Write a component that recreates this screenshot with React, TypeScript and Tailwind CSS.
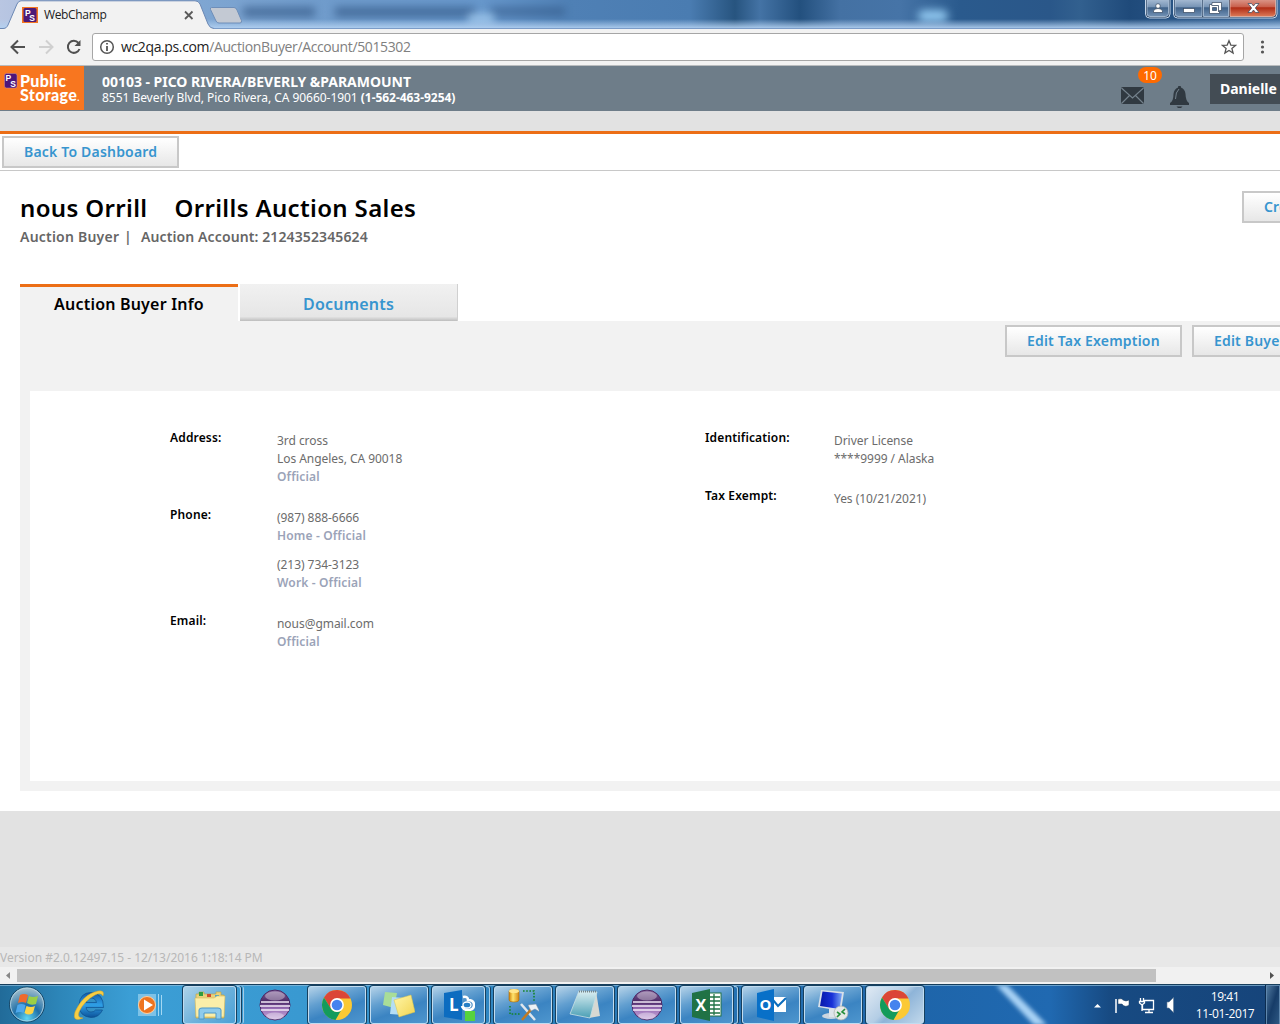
import React from "react";

function BrandMark({ size = 16, className = "" }: { size?: number; className?: string }) {
  return (
    <svg width={size} height={size} viewBox="0 0 16 16" className={className}>
      <rect width="16" height="16" fill="#f47521" />
      <rect x="1.5" y="1" width="13" height="14" rx="1.5" fill="#4c1a78" />
      <text x="3" y="9" fontSize="8.5" fontWeight="700" fill="#fff" fontFamily="Liberation Sans, sans-serif">P</text>
      <text x="7.300" y="13.5" fontSize="8.5" fontWeight="700" fill="#fff" fontFamily="Liberation Sans, sans-serif">S</text>
    </svg>
  );
}

function TitleBar() {
  return (
    <div className="relative h-[29px] overflow-hidden bg-[linear-gradient(90deg,#b9c6e2_0px,#7fa6d2_200px,#6f9bcb_330px,#6797cb_480px,#4f80b5_570px,#4a7cb1_690px,#27547f_735px,#4473a5_760px,#23507e_800px,#4471a3_840px,#4674a7_900px,#2a5a8d_960px,#2a5789_1050px,#32608f_1080px,#1f4a7a_1130px,#3c6a9c_1280px)]">
      <div className="absolute left-[243px] top-[7px] h-[10px] w-[72px] bg-[#2b4f7d] opacity-60 blur-[4px]" />
      <div className="absolute left-[335px] top-[7px] h-[10px] w-[140px] bg-[#2b4f7d] opacity-60 blur-[4px]" />
      <div className="absolute left-[490px] top-[7px] h-[9px] w-[75px] bg-[#2b4f7d] opacity-50 blur-[4px]" />
      <div className="absolute left-[468px] top-[14px] h-[10px] w-[26px] bg-[#a9d0f2] opacity-80 blur-[4px]" />
      <div className="absolute left-[918px] top-[10px] h-[12px] w-[30px] rounded-full bg-[#8fc6ee] blur-[4px]" />
      <div className="absolute inset-x-0 bottom-0 h-[10px] bg-linear-to-b from-transparent to-[#b3d1f1]" />
      <div className="absolute inset-x-0 bottom-0 h-px bg-[#7b9cc8]" />
      <svg className="absolute left-0 top-0" width="245" height="29">
        <path d="M0 28.500H3C6 28.500 7 27 8 25L17 4Q18.500 .8 21 .8H195Q198.500 .8 200 4L208 24Q210 28.500 214 28.500V29H0Z" fill="#f2f2f2" />
        <path d="M0 28.500H3C6 28.500 7 27 8 25L17 4Q18.500 .8 21 .8H195Q198.500 .8 200 4L208 24Q210 28.500 214 28.500" fill="none" stroke="#6c88b4" />
        <path d="M211.500 7.500H234Q236 7.500 237 10L241.500 20.500Q242 23 240 23H219Q217 23 216 21L210.500 9.500Q210 7.500 211.500 7.500Z" fill="#c3c9d3" stroke="#6e8eb9" />
        <path d="M185 11.500l7.500 7.500M192.500 11.500l-7.500 7.500" stroke="#5a5a5a" strokeWidth="1.800" />
      </svg>
      <BrandMark className="absolute left-[22px] top-[7px]" />
      <span className="absolute left-[44px] top-[7px] font-['Open_Sans',sans-serif] text-[12px] leading-[16px] tracking-[-0.350px] text-[#222]">WebChamp</span>
      <svg className="absolute left-[1144px] top-0" width="136" height="20">
        <defs>
          <linearGradient id="wb" x2="0" y2="1"><stop stopColor="#a9bdd5" /><stop offset=".45" stopColor="#7794b5" /><stop offset=".5" stopColor="#3f6189" /><stop offset="1" stopColor="#7292b5" /></linearGradient>
          <linearGradient id="wr" x2="0" y2="1"><stop stopColor="#dc9a8d" /><stop offset=".45" stopColor="#c9604c" /><stop offset=".5" stopColor="#b02c15" /><stop offset="1" stopColor="#dc7a58" /></linearGradient>
        </defs>
        <path d="M1.500-2V14Q1.500 18 5.500 18H22Q26 18 26 14V-2Z" fill="#1b3454" stroke="#c5d6ea" />
        <path d="M3-1V13.500Q3 16.500 6 16.500H21.500Q24.500 16.500 24.500 13.500V-1Z" fill="url(#wb)" stroke="#b5c9df" strokeWidth=".8" />
        <path d="M29.500-2V14Q29.500 18 33.500 18H129Q133 18 133 14V-2Z" fill="#1b3454" stroke="#c5d6ea" />
        <path d="M31-1V13.500Q31 16.500 34 16.500H58V-1Z" fill="url(#wb)" stroke="#b5c9df" strokeWidth=".8" />
        <path d="M59.500-1V16.500H84.500V-1Z" fill="url(#wb)" stroke="#b5c9df" strokeWidth=".8" />
        <path d="M86-1V16.500H128.500Q131.500 16.500 131.500 13.500V-1Z" fill="url(#wr)" stroke="#edc0b4" strokeWidth=".8" />
        <g fill="#fff" stroke="#34465e" strokeWidth=".7">
          <circle cx="14" cy="6" r="2.300" />
          <path d="M9.500 12.500V11Q10 8.500 14 8.500T18.500 11V12.500Z" />
          <rect x="39.500" y="8.500" width="11" height="4" />
          <path fillRule="evenodd" d="M68 2.500H77.500V10.500H75.500V13.500H65.500V4.500H68ZM68.500 7.500V10.500H72.500V7.500Z" />
          <path d="M104 3.500h3.500l2 2.500 2-2.500h3.500l-3.700 4.500 3.700 4.500h-3.500l-2-2.500-2 2.500H104l3.700-4.500Z" />
        </g>
        <path d="M67.500 5.500H74.500V12" fill="none" stroke="#34465e" strokeWidth=".8" />
      </svg>
    </div>
  );
}

function Toolbar() {
  return (
    <div className="flex h-[37px] items-center border-b border-[#b9bcbe] bg-[#f2f2f2]">
      <svg width="92" height="36" fill="none" strokeWidth="2">
        <path d="M25 18H12M18 11.500L11.500 18L18 24.500" stroke="#505050" />
        <path d="M39 18H52M46 11.500L52.500 18L46 24.500" stroke="#d0d0d0" />
        <path d="M78.500 14A6 6 0 1 0 79.500 20" stroke="#505050" />
        <path d="M80.500 11V17H74.500Z" fill="#505050" />
      </svg>
      <div className="flex h-7 w-[1152px] items-center rounded-[3px] border border-[#a6a6a6] bg-white">
        <svg width="28" height="26" fill="none" stroke="#555" strokeWidth="1.500"><circle cx="14" cy="13" r="6.300" /><path d="M14 12V17M14 9V10.600" strokeWidth="1.800" /></svg>
        <span className="font-['Open_Sans',sans-serif] text-[14px] leading-5 tracking-[-0.370px] text-[#808080]"><span className="text-[#222]">wc2qa.ps.com</span>/AuctionBuyer/Account/5015302</span>
        <svg className="ml-auto mr-[6px]" width="16" height="16" viewBox="0 0 16 16"><path d="M8 1.800L9.800 6.100L14.500 6.400L10.900 9.400L12.100 14L8 11.500L3.900 14L5.100 9.400L1.500 6.400L6.200 6.100Z" fill="none" stroke="#555" strokeWidth="1.300" /></svg>
      </div>
      <svg width="36" height="36" fill="#555"><circle cx="18.500" cy="13" r="1.600" /><circle cx="18.500" cy="18" r="1.600" /><circle cx="18.500" cy="23" r="1.600" /></svg>
    </div>
  );
}

function SiteHeader() {
  return (
    <header className="relative flex h-[45px] bg-[#6e7d89] text-white">
      <div className="flex h-[44px] w-[84px] bg-[#f8761f] pl-1 pt-[7px]">
        <svg width="14" height="16" viewBox="0 0 14 16">
          <rect x=".5" y=".5" width="12.500" height="14.500" rx="2" fill="#4d167a" stroke="#c78fa0" strokeWidth=".5" />
          <text x="1.500" y="8" fontSize="8.500" fontWeight="700" fill="#fff" fontFamily="Liberation Sans, sans-serif">P</text>
          <text x="6.300" y="13.500" fontSize="8.500" fontWeight="700" fill="#fff" fontFamily="Liberation Sans, sans-serif">S</text>
        </svg>
        <div className="ml-[2px] whitespace-nowrap pt-px font-['Lato',sans-serif] text-[16px] font-black leading-[13.500px] tracking-[0.350px]"><div>Public</div><div>Storage<span className="text-[9px]">.</span></div></div>
      </div>
      <div className="ml-[18px] whitespace-nowrap pt-[8px] font-['Noto_Sans',sans-serif]">
        <div className="text-[14px] font-bold leading-4 tracking-[-0.030px]">00103 - PICO RIVERA/BEVERLY &amp;PARAMOUNT</div>
        <div className="text-[12px] leading-4 tracking-[-0.040px]">8551 Beverly Blvd, Pico Rivera, CA 90660-1901 <b>(1-562-463-9254)</b></div>
      </div>
      <svg className="absolute left-[1120px] top-[20px]" width="72" height="24">
        <rect x="1" y="1" width="23" height="17" rx="1.500" fill="#303941" />
        <path d="M1.500 2L12.500 12L23.500 2M1.500 17.500L9.500 9.500M23.500 17.500L15.500 9.500" fill="none" stroke="#75838e" strokeWidth="1.100" />
        <path d="M59.500-.5Q61-.5 61 1.500Q65 3 65.500 8Q65.700 15 69 17V19H50V17Q53.500 15 53.500 8Q54 3 58 1.500Q58-.5 59.500-.5Z" fill="#303941" />
        <path d="M55.500 13Q55.500 6 59 3" fill="none" stroke="#75838e" />
        <path d="M56.500 20.500H62.500L61 22H58Z" fill="#303941" />
      </svg>
      <span className="absolute left-[1138px] top-px h-4 w-6 rounded-full bg-[#ff6a00] text-center font-['Noto_Sans',sans-serif] text-[12px] leading-[17px]">10</span>
      <div className="absolute left-[1210px] top-[8px] h-[30px] w-[70px] whitespace-nowrap bg-[#434c54] pl-[10px] font-['Noto_Sans',sans-serif] text-[14px] font-bold leading-[30px] tracking-[-0.020px]">Danielle</div>
    </header>
  );
}

function ActionButton({ children, className = "" }: { children: React.ReactNode; className?: string }) {
  return <button className={`h-8 w-[177px] shrink-0 whitespace-nowrap border-2 border-[#c8c8c8] bg-linear-to-b from-white to-[#e7e7e7] pl-5 text-left text-[14px] font-semibold leading-7 tracking-[0.190px] text-[#3795cf] ${className}`}>{children}</button>;
}

function Field({ label, width, children, className = "" }: { label: string; width: string; children: React.ReactNode; className?: string }) {
  return (
    <div className={`flex ${className}`}>
      <div className={`${width} shrink-0 text-[12px] font-semibold leading-[18px] tracking-[0.150px] text-black`}>{label}</div>
      <div className="whitespace-nowrap pt-[3px] text-[12px] leading-[18px] tracking-[-0.050px] text-[#6c6c6c]">{children}</div>
    </div>
  );
}

function Tag({ children }: { children: React.ReactNode }) {
  return <div className="font-semibold tracking-[0.150px] text-[#9ba3b8]">{children}</div>;
}

function Page() {
  return (
    <main className="h-[640px] overflow-hidden bg-white pl-5">
      <div className="flex h-[113px] justify-between pt-5">
        <div className="whitespace-nowrap">
          <h1 className="flex gap-[27px] text-[24px] font-semibold leading-[34px] tracking-[0.350px] text-black"><span>nous Orrill</span><span>Orrills Auction Sales</span></h1>
          <div className="mt-[3px] flex text-[14px] font-semibold leading-[18px] tracking-[0.110px] text-[#666]"><span className="w-[104px] tracking-[0.220px]">Auction Buyer</span><span className="w-[17px]">|</span><span>Auction Account: 2124352345624</span></div>
        </div>
        <div className="w-[38px] overflow-hidden"><ActionButton>Create Note</ActionButton></div>
      </div>
      <div className="flex h-[37px] gap-[2px] text-center text-[16px] font-semibold tracking-[0.200px]">
        <div className="w-[218px] border-t-3 border-[#ec6e16] bg-[#f2f2f2] leading-[35px] text-black">Auction Buyer Info</div>
        <div className="w-[218px] border-r border-[#d0d0d0] bg-[linear-gradient(#f1f1f1,#e6e6e6_88%,#bdbdbd)] pt-[3px] leading-[35px] text-[#3795cf]">Documents</div>
      </div>
      <section className="h-[470px] bg-[#f2f2f2] pb-[10px] pl-[10px]">
        <div className="flex h-[70px] gap-[10px] overflow-hidden pl-[975px] pt-1"><ActionButton>Edit Tax Exemption</ActionButton><ActionButton>Edit Buyer Info</ActionButton></div>
        <div className="flex h-[390px] bg-white pl-[140px] pt-[38px]">
          <div className="w-[535px]">
            <Field label="Address:" width="w-[107px]" className="h-[77px]">3rd cross<br />Los Angeles, CA 90018<Tag>Official</Tag></Field>
            <Field label="Phone:" width="w-[107px]" className="h-[106px]">(987) 888-6666<Tag>Home - Official</Tag><div className="mt-[11px]">(213) 734-3123</div><Tag>Work - Official</Tag></Field>
            <Field label="Email:" width="w-[107px]">nous@gmail.com<Tag>Official</Tag></Field>
          </div>
          <div>
            <Field label="Identification:" width="w-[129px]" className="h-[58px]">Driver License<br />****9999 / Alaska</Field>
            <Field label="Tax Exempt:" width="w-[129px]">Yes (10/21/2021)</Field>
          </div>
        </div>
      </section>
    </main>
  );
}

function Icon({ name }: { name: string }) {
  return (
    <svg width="32" height="32" viewBox="0 0 32 32" className="shrink-0">
      {name === "explorer" && <g>
        <path d="M2 5H5V3H10V5H22V3H27V6H30V29H2Z" fill="#e8d17c" stroke="#bfa23e" strokeWidth=".6" />
        <rect x="5" y="3" width="4" height="4" fill="#2d9c3d" /><rect x="13" y="5" width="4" height="3" fill="#d14b2d" /><rect x="21" y="6" width="4" height="4" fill="#44a7d1" />
        <path d="M1 9H20L23 7H31L30 28H2Z" fill="#fbeea9" stroke="#d4b95c" strokeWidth=".6" />
        <path d="M5 30V21Q5 19 8 19H24Q27 19 27 21V30H22V24H10V30Z" fill="#8ecbec" stroke="#4c98c9" />
      </g>}
      {name === "eclipse" && <g>
        <circle cx="16" cy="16" r="15" fill="url(#ecl)" stroke="#4a2865" /><path d="M2 13H30M1 17H31M2 21H30" stroke="#f3eaf8" strokeWidth="1.400" /><ellipse cx="16" cy="7" rx="10" ry="4.500" fill="#fff" opacity=".35" /><ellipse cx="16" cy="27" rx="9" ry="3.500" fill="#fff" opacity=".35" />
      </g>}
      {name === "chrome" && <g>
        <circle cx="16" cy="16" r="15" fill="#fbc934" />
        <path d="M3 8.500A15 15 0 0 1 29.500 9.500H16L10 20Z" fill="#db4637" />
        <path d="M3 8.500L10.200 20A6.800 6.800 0 0 0 20 21.500L14.500 31A15 15 0 0 1 3 8.500Z" fill="#149b5c" />
        <circle cx="16" cy="16" r="6.900" fill="#fff" /><circle cx="16" cy="16" r="5.300" fill="#4683ee" />
      </g>}
      {name === "sticky" && <g>
        <path d="M2 3L14 4L11 19L0 16Z" fill="#a9dd98" /><path d="M9 8L22 9L20 26L7 25Z" fill="#b4def5" /><path d="M11 11L28 6L32 23L16 28Z" fill="url(#note)" stroke="#dac449" strokeWidth=".5" />
      </g>}
      {name === "lync" && <g>
        <path d="M1 4L19 1V31L1 28Z" fill="#0c6cc0" /><path d="M20 8Q25 7 25 11Q31 11 31 16Q31 21 25 21Q20 21 19 17" fill="none" stroke="#fff" strokeWidth="2.600" /><ellipse cx="24" cy="16" rx="4" ry="3" fill="#277fc6" stroke="#fff" strokeWidth="1.300" />
        <text x="6" y="22" fontSize="17" fontWeight="700" fill="#fff" fontFamily="Open Sans, sans-serif">L</text><rect x="22" y="22" width="10" height="10" fill="#56d23e" />
      </g>}
      {name === "tools" && <g>
        <path d="M2 2Q2 0 7 0T12 2V11Q12 13 7 13T2 11Z" fill="url(#gold)" stroke="#a66a0a" strokeWidth=".6" /><ellipse cx="7" cy="2" rx="5" ry="2" fill="#ffe68c" />
        <path d="M16 2H27V13M3 17V25H13" fill="none" stroke="#16842b" strokeWidth="1.600" strokeDasharray="1.600 1.600" />
        <path d="M14 15L28 31" stroke="#dfe6ed" strokeWidth="2.500" /><path d="M27 17L15 31" stroke="#c27a22" strokeWidth="2.500" /><path d="M21 16L29 15L33 23L28 20L24 22Z" fill="#edf2f6" stroke="#76899c" strokeWidth=".5" />
      </g>}
      {name === "notepad" && <g>
        <path d="M27 2L31 27L20 29Z" fill="#d7d8d2" /><path d="M10 2L28 3L21 29L1 25Z" fill="url(#pad)" stroke="#c9dfe3" strokeWidth=".8" /><path d="M10 2.500H27" stroke="#74848a" strokeWidth="2" strokeDasharray="1 1" />
      </g>}
      {name === "excel" && <g>
        <rect x="16" y="4" width="14" height="23" fill="#fff" stroke="#207245" /><path d="M18 8H29M18 12H29M18 16H29M18 20H29M18 24H29M23 5V26" stroke="#207245" strokeWidth="1.300" />
        <path d="M1 4L19 0V32L1 28Z" fill="#207245" /><text x="4.500" y="21.500" fontSize="16" fontWeight="700" fill="#fff" fontFamily="Open Sans, sans-serif">X</text>
      </g>}
      {name === "outlook" && <g>
        <rect x="17" y="8" width="14" height="15" fill="#fff" /><path d="M18 11L23 17L31 9" fill="none" stroke="#0b6cbd" strokeWidth="2" />
        <path d="M2 4L19 0V32L2 28Z" fill="#0870c8" /><text x="4.500" y="21" fontSize="15" fontWeight="700" fill="#fff" fontFamily="Open Sans, sans-serif">O</text>
      </g>}
      {name === "remote" && <g>
        <ellipse cx="14" cy="27" rx="9" ry="3" fill="#cbd5df" /><path d="M12 20H19V28H12Z" fill="#dfe5eb" /><path d="M4 1L27 3L24 22L1 18Z" fill="#d8e0e9" /><path d="M5.500 2.500L25 4.500L22.500 20L3 17Z" fill="url(#screen)" />
        <circle cx="24" cy="24" r="7" fill="#e6e9e6" stroke="#a9b0ac" strokeWidth=".7" /><path d="M20 23L23 25L20 28M28 20L25 23L28 25" fill="none" stroke="#27903c" strokeWidth="1.600" />
      </g>}
    </svg>
  );
}

function TaskButton({ name, stacked = false, active = false, explorer = false }: { name: string; stacked?: boolean; active?: boolean; explorer?: boolean }) {
  return (
    <div className="flex h-10 w-[62px] shrink-0 pt-px">
      <div className={`flex h-[38px] items-center justify-center rounded-[3px] border border-[#c1dcf0] shadow-[0_0_0_1px_#16405f] ${stacked ? "w-[53px]" : "w-[58px]"} ${active ? "bg-[linear-gradient(135deg,#dfe9f3,#b3cde5_45%,#8eb4d8_55%,#c1d8eb)]" : explorer ? "bg-[linear-gradient(135deg,#add2e8,#6eb2dc_50%,#4ba1d6)]" : "bg-[linear-gradient(160deg,#b4d2e8,#629fd0_35%,#3b84c2_60%,#4e96ce)]"}`}><Icon name={name} /></div>
      {stacked && <div className="ml-px h-[38px] w-[4px] rounded-r-[3px] border border-l-0 border-[#a7cbe5] shadow-[1px_0_0_#16405f]" />}
      {explorer && <div className="h-[38px] w-[3px] rounded-r-[3px] border-r border-[#a7cbe5]" />}
    </div>
  );
}

function Taskbar() {
  return (
    <footer className="relative flex h-10 overflow-hidden border-t border-[#173e5c] bg-[linear-gradient(90deg,#216b99_0px,#2d86b9_60px,#3b9ed5_130px,#3999d1_300px,#2a7bb9_600px,#1e65aa_920px,#2069b1_1050px,#174a82_1110px,#16447a_1280px)]">
      <svg className="absolute left-[990px] top-0" width="70" height="40"><path d="M6 0H17L57 40H44Z" fill="#a8d2f5" className="blur-[2px]" /></svg>
      <div className="absolute inset-x-0 top-0 h-px bg-[#8dbcdc] opacity-70" />
      <svg width="183" height="40" className="relative shrink-0">
        <defs>
          <radialGradient id="orb" cy=".9" r=".85"><stop stopColor="#5ed7f4" /><stop offset=".45" stopColor="#1e6fa8" /><stop offset="1" stopColor="#9fbccb" /></radialGradient>
          <linearGradient id="ecl" x2="0" y2="1"><stop stopColor="#8a6a9f" /><stop offset=".4" stopColor="#472462" /><stop offset=".6" stopColor="#9368b1" /><stop offset="1" stopColor="#cdb0df" /></linearGradient>
          <linearGradient id="ie" x2="0" y2="1"><stop stopColor="#1259a8" /><stop offset=".5" stopColor="#2f9fe6" /><stop offset="1" stopColor="#0c5299" /></linearGradient>
          <linearGradient id="note" x2="1" y2="1"><stop stopColor="#fff6a8" /><stop offset="1" stopColor="#f2d451" /></linearGradient>
          <linearGradient id="gold"><stop stopColor="#ce7f08" /><stop offset=".4" stopColor="#ffe56e" /><stop offset="1" stopColor="#d38411" /></linearGradient>
          <linearGradient id="pad" x2="0" y2="1"><stop stopColor="#dceff2" /><stop offset="1" stopColor="#4a9fb5" /></linearGradient>
          <linearGradient id="screen"><stop stopColor="#0718aa" /><stop offset=".55" stopColor="#1831d8" /><stop offset="1" stopColor="#7daaf4" /></linearGradient>
        </defs>
        <circle cx="27" cy="19.500" r="17.500" fill="url(#orb)" stroke="#164666" /><circle cx="27" cy="19.500" r="16.500" fill="none" stroke="#b9dbea" strokeWidth=".8" />
        <path d="M20 10Q24 8 28 10L26 18Q22 16 18 18Z" fill="#f06a2c" /><path d="M29 11Q33 13 38 11L36 19Q31 21 27 18Z" fill="#9bcf45" /><path d="M17.500 20Q21 18 25.500 20L23.500 28Q20 26 15.500 28Z" fill="#4ea8ec" /><path d="M26.500 21Q31 23 35 21L33 28Q29 31 24.500 28Z" fill="#fbd447" />
        <path fillRule="evenodd" d="M103.500 22.500H86Q87 27 91 27Q94.500 27 95.500 25H102.500Q99 32.500 91 32.500Q79 31.500 79 20Q80 7.500 91 7.500Q103.500 8 103.500 22.500ZM86 17.500H96.500Q95.500 13 91 13Q87 13.500 86 17.500Z" fill="url(#ie)" stroke="#0d4f8e" strokeWidth=".7" />
        <path d="M83 33Q72 38 75 27Q83 9 98 6Q105 5 103 11Q101 7 95 10Q84 16 79 27Q77 33 83 33Z" fill="#f6ce45" stroke="#dba425" strokeWidth=".5" />
        <rect x="138" y="9" width="18" height="22" fill="#8fcceb" opacity=".8" /><path d="M158.500 9V31M161.500 10V30" stroke="#a4d8f2" /><circle cx="147" cy="20" r="8.500" fill="#ee7420" stroke="#ffd0a0" /><path d="M144 14.500L153 20L144 25.500Z" fill="#fff" />
      </svg>
      <div className="relative flex">
        <TaskButton name="explorer" stacked explorer />
        <div className="flex w-[63px] items-center pl-[14px]"><Icon name="eclipse" /></div>
        <TaskButton name="chrome" /><TaskButton name="sticky" /><TaskButton name="lync" stacked /><TaskButton name="tools" /><TaskButton name="notepad" /><TaskButton name="eclipse" /><TaskButton name="excel" stacked /><TaskButton name="outlook" /><TaskButton name="remote" /><TaskButton name="chrome" active />
      </div>
      <div className="absolute right-0 top-0 flex h-10">
        <svg width="92" height="40" fill="none" stroke="#fff">
          <path d="M4 22.500L7.500 19L11 22.500Z" fill="#fff" stroke="none" />
          <path d="M26 14V28" strokeWidth="1.500" /><path d="M28 14Q32 13 33 15Q36 17 39 15V20Q35 23 32 19H28Z" fill="#fff" stroke="#24425f" strokeWidth=".5" />
          <path d="M54 15.500H63.500V24.500H52.500V20M55 27.500H63M59 25V27M50.500 13V16M53.500 13V16M49.500 16.500H54.500V18L52 20L49.500 18ZM52 20V26" strokeWidth="1.300" />
          <path d="M77 17H79L83.500 12.500V27.500L79 23H77Z" fill="#fff" stroke="#637d98" strokeWidth=".6" />
        </svg>
        <div className="w-[80px] pl-[6px] pt-[3px] text-center font-['Open_Sans',sans-serif] text-[12px] leading-[17px] tracking-[-0.400px] text-white">19:41<br />11-01-2017</div>
        <div className="ml-1 h-10 w-[14px] border border-[#5f87ad] bg-linear-to-br from-[#4f789e] via-[#163c68] to-[#2d5782] shadow-[-1px_0_0_#0b2c50]" />
      </div>
    </footer>
  );
}

export default function App() {
  return (
    <div className="h-[1024px] w-[1280px] overflow-hidden bg-[#e2e2e2] font-['Noto_Sans',sans-serif]">
      <TitleBar />
      <Toolbar />
      <SiteHeader />
      <div className="h-[23px] border-b-3 border-[#ec6e16] bg-[#e2e2e2]" />
      <div className="h-[37px] border-b border-[#c8c8c8] bg-white pl-[2px] pt-[2px]"><ActionButton>Back To Dashboard</ActionButton></div>
      <Page />
      <div className="h-[136px]" />
      <div className="h-5 bg-[#e8e8e8] text-[12px] leading-[21px] tracking-[-0.020px] text-[#b7b7b7]">Version #2.0.12497.15 - 12/13/2016 1:18:14 PM</div>
      <div className="flex h-[17px] items-center bg-[#f1f1f1]">
        <svg width="17" height="17"><path d="M10 5V12L6 8.500Z" fill="#888" /></svg>
        <div className="h-[13px] w-[1139px] bg-[#c1c1c1]" />
        <svg className="ml-auto" width="17" height="17"><path d="M7 5V12L11 8.500Z" fill="#505050" /></svg>
      </div>
      <Taskbar />
    </div>
  );
}
